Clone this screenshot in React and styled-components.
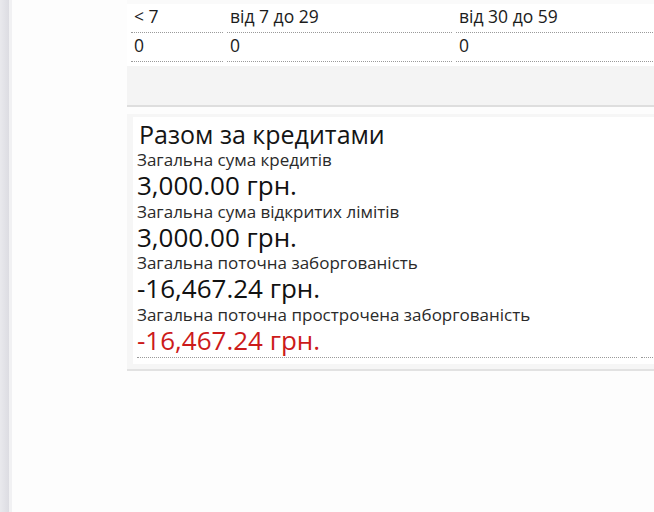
import React from "react";
import styled, { createGlobalStyle } from "styled-components";

const GlobalStyle = createGlobalStyle`
  html, body {
    margin: 0;
    padding: 0;
    background: #fdfdfd;
    font-family: "Open Sans", "Noto Sans", sans-serif;
    color: #1f1f1f;
  }
  #root {
    height: 100vh;
  }
`;

const PageStyled = styled.div`
  display: flex;
  height: 100vh;
  overflow: hidden;
`;

const ScrollStrip = styled.div`
  flex: 0 0 9px;
  background: linear-gradient(to right, #e9e9ed, #dcdce2);
  border-right: 3px solid #f1f1f3;
`;

const MainStyled = styled.div`
  flex: 1;
  padding-left: 115px;
  min-width: 0;
`;

const Content = styled.div`
  width: 640px;
`;

const OverdueBlock = styled.div`
  background: #f4f4f4;
  border-bottom: 2px solid #dedede;
  padding-bottom: 39px;
  border-top: 4px solid #fafafa;
`;

const DaysTable = styled.table`
  width: 100%;
  table-layout: fixed;
  background: #fff;
  border-collapse: separate;
  border-spacing: 4px 0;
  padding-bottom: 4px;
`;

const Cell = styled.td`
  width: ${(p) => p.$width || "auto"};
  height: 29px;
  padding: 0 3px 5px;
  font-size: 17.5px;
  line-height: 21px;
  vertical-align: bottom;
  box-sizing: border-box;
  border-bottom: 1px dotted #9a9a9a;
  white-space: nowrap;
  color: #1c1c1c;
`;

const Gap = styled.div`
  height: 7px;
`;

const TotalsBlock = styled.div`
  background: #f6f6f6;
  border-bottom: 2px solid #e2e2e2;
  padding: 3px 0 5px 6px;
`;

const Card = styled.div`
  background: #fff;
  display: flex;
  gap: 4px;
  padding-left: 4px;
  padding-bottom: 6px;
`;

const CardMain = styled.div`
  width: 500px;
  border-bottom: 1px dotted #9a9a9a;
  padding-bottom: 2px;
`;

const CardSide = styled.div`
  flex: 1;
  border-bottom: 1px dotted #9a9a9a;
`;

const Title = styled.div`
  font-size: 25px;
  line-height: 30px;
  padding-left: 2px;
  margin-top: 2px;
  color: #151515;
`;

const Label = styled.div`
  font-size: 17px;
  line-height: 22px;
  color: #2a2a2a;
`;

const Amount = styled.div`
  font-size: 26px;
  line-height: 29.5px;
  color: ${(p) => (p.$danger ? "#cc1a1a" : "#111")};
`;

const days = [
  { head: "< 7", value: "0", width: "92px" },
  { head: "від 7 до 29", value: "0", width: "225px" },
  { head: "від 30 до 59", value: "0" },
];

const totals = [
  { label: "Загальна сума кредитів", amount: "3,000.00 грн." },
  { label: "Загальна сума відкритих лімітів", amount: "3,000.00 грн." },
  { label: "Загальна поточна заборгованість", amount: "-16,467.24 грн." },
  {
    label: "Загальна поточна прострочена заборгованість",
    amount: "-16,467.24 грн.",
    danger: true,
  },
];

export default function App() {
  return (
    <>
      <GlobalStyle />
      <PageStyled>
        <ScrollStrip />
        <MainStyled>
          <Content>
            <OverdueBlock>
              <DaysTable>
                <tbody>
                  <tr>
                    {days.map((d) => (
                      <Cell key={d.head} $width={d.width}>
                        {d.head}
                      </Cell>
                    ))}
                  </tr>
                  <tr>
                    {days.map((d) => (
                      <Cell key={d.head} $width={d.width}>
                        {d.value}
                      </Cell>
                    ))}
                  </tr>
                </tbody>
              </DaysTable>
            </OverdueBlock>
            <Gap />
            <TotalsBlock>
              <Card>
                <CardMain>
                  <Title>Разом за кредитами</Title>
                  {totals.map((t) => (
                    <React.Fragment key={t.label}>
                      <Label>{t.label}</Label>
                      <Amount $danger={t.danger}>{t.amount}</Amount>
                    </React.Fragment>
                  ))}
                </CardMain>
                <CardSide />
              </Card>
            </TotalsBlock>
          </Content>
        </MainStyled>
      </PageStyled>
    </>
  );
}
